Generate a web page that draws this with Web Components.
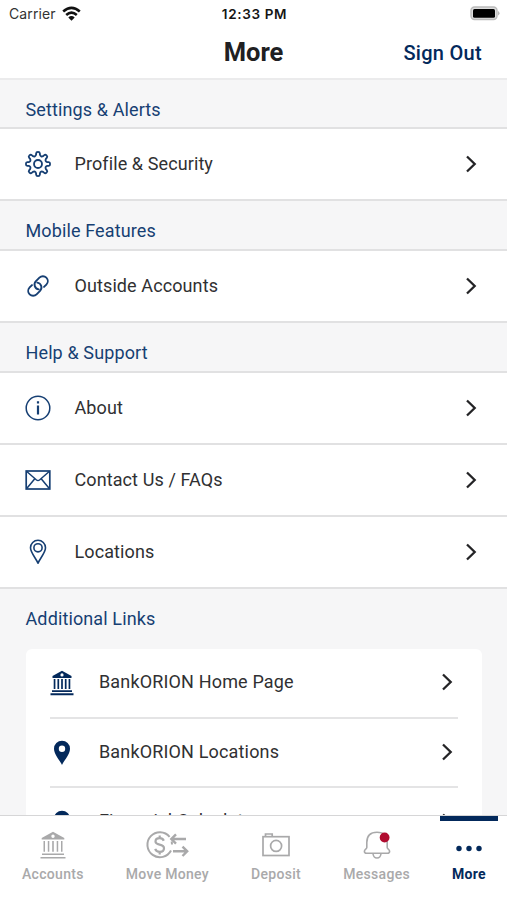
<!DOCTYPE html>
<html lang="en">
<head>
<meta charset="utf-8">
<title>More</title>
<style>
html, body { margin: 0; height: 100%; }
body { font-family: Roboto, "Liberation Sans", sans-serif; color: #303032; background: #f6f6f7; overflow: hidden;
  --navy: #163f73; --deep: #03295b; --line: #e1e1e2; }
</style>
</head>
<body>
<more-screen></more-screen>
<script>
const icons = {
  gear: `<svg width="26" height="26" viewBox="-12.700 -12.700 25.400 25.400" fill="none" stroke="currentColor" stroke-width="1.800" stroke-linejoin="round"><circle r="3.900"/><path id="g"/></svg>`,
  link: `<svg width="26" height="26" viewBox="-13 -13 26 26" fill="none" stroke="currentColor" stroke-width="1.900" stroke-linecap="round"><g transform="rotate(-45)"><path d="M3.600 4.900H6.900A4.900 4.900 0 0 0 6.900 -4.900H2A4.900 4.900 0 0 0 -1.900 2.900"/><path transform="rotate(180)" d="M3.600 4.900H6.900A4.900 4.900 0 0 0 6.900 -4.900H2A4.900 4.900 0 0 0 -1.900 2.900"/></g></svg>`,
  info: `<svg width="26" height="26" viewBox="0 0 26 26" fill="none" stroke="currentColor" stroke-width="1.500"><circle cx="13" cy="13" r="11.800"/><path stroke-width="2.200" d="M13 10.500V19.500M13 6.300V8.500"/></svg>`,
  mail: `<svg width="26" height="26" viewBox="0 0 26 26" fill="none" stroke="currentColor" stroke-width="1.700"><rect x="1.200" y="4" width="23.600" height="18"/><path stroke-width="1.500" d="M1.500 4.300L11.500 13Q13 14.200 14.500 13L24.500 4.300M1.500 21.700L9.800 11.700M24.500 21.700L16.200 11.700"/></svg>`,
  pin: `<svg width="26" height="26" viewBox="0 0 26 26" fill="none" stroke="currentColor" stroke-width="1.600" stroke-linejoin="round"><path d="M13 24.200C11.500 20 5.500 13.800 5.500 8.800A7.500 7.500 0 0 1 20.500 8.800C20.500 13.800 14.500 20 13 24.200Z"/><circle cx="13" cy="8.800" r="4.100"/></svg>`,
  bank: `<svg width="24" height="26" viewBox="0 0 24 26" fill="currentColor"><path fill-rule="evenodd" d="M12 .8L21.500 6V8H2.500V6ZM12 3.300A1.600 1.600 0 1 0 12 6.500A1.600 1.600 0 1 0 12 3.300Z"/><path d="M3.700 9H5.400V19H3.700ZM7.450 9H9.150V19H7.450ZM11.150 9H12.850V19H11.150ZM14.850 9H16.550V19H14.850ZM18.600 9H20.300V19H18.600ZM2 20.200H22V22H2ZM.5 23.300H23.500V25.200H.5Z"/></svg>`,
  hall: `<svg width="28" height="30" viewBox="0 0 28 30" fill="currentColor"><path fill-rule="evenodd" d="M14 1.800L25.300 8V9.600H2.700V8ZM14 4.600A1.700 1.700 0 1 0 14 8A1.700 1.700 0 1 0 14 4.600Z"/><path d="M4.500 11H6V21.800H4.500ZM8.800 11H10.300V21.800H8.800ZM13.200 11H14.800V21.800H13.200ZM17.700 11H19.200V21.800H17.700ZM22 11H23.500V21.800H22ZM3 23.400H25V25.100H3ZM1.500 26.900H26.500V28.600H1.500Z"/></svg>`,
  marker: `<svg width="24" height="26" viewBox="0 0 24 26" fill="currentColor"><path fill-rule="evenodd" d="M12 25C10 20.500 4 14.500 4 8.700A8 8 0 0 1 20 8.700C20 14.500 14 20.500 12 25ZM12 5.600A3.200 3.200 0 1 0 12 12A3.200 3.200 0 1 0 12 5.600Z"/></svg>`,
  chevron: `<svg width="12" height="18" viewBox="0 0 12 18" fill="none" stroke="#242426" stroke-width="2.300"><path d="M2 1.500L9.700 9L2 16.500"/></svg>`,
  money: `<svg width="44" height="30" viewBox="0 0 44 30" fill="none" stroke="currentColor" stroke-width="2"><path d="M24.600 6.800A12.500 12.500 0 1 0 26 20.500M26.700 11.500L27 14.500"/><path stroke-width="2.200" d="M18.800 10.800C18 8.900 16.500 8.200 14.700 8.200C12.300 8.200 10.500 9.500 10.500 11.500C10.500 16 19 13.300 19 18.200C19 20.400 17.300 21.800 14.800 21.800C12.500 21.800 10.900 20.800 10.200 18.800M14.700 5.500V8.200M14.700 21.800V24.500"/><path stroke-width="2.400" d="M41 9H26M31 4.300L26.300 9L31 13.700M28 21.300H42M37.500 16.600L42.200 21.300L37.500 26"/></svg>`,
  camera: `<svg width="30" height="30" viewBox="0 0 30 30" fill="none" stroke="currentColor" stroke-width="1.700"><rect x="2" y="6.700" width="26" height="18.800"/><path d="M4.500 6.700V4H11.200V6.700"/><circle cx="15.100" cy="15.900" r="5.500"/></svg>`,
  bell: `<svg width="30" height="30" viewBox="0 0 30 30" fill="none" stroke="currentColor" stroke-width="1.600" stroke-linejoin="round"><path d="M4.800 12.500C4.800 6 8.500 2.200 15 2.200S25.200 6 25.200 12.500V17.500C25.200 19 27.600 19.300 27.600 21.300C27.600 22.700 26.700 23.300 25.500 23.300H4.500C3.300 23.300 2.400 22.700 2.400 21.300C2.400 19.300 4.800 19 4.800 17.500ZM11 23.300A4 4.700 0 0 0 19 23.300"/><circle cx="22.600" cy="7.500" r="4.900" fill="#b00c2f" stroke="none"/></svg>`,
  dots: `<svg width="30" height="30" viewBox="0 0 30 30" fill="currentColor"><circle cx="5" cy="18.500" r="2.700"/><circle cx="15" cy="18.500" r="2.700"/><circle cx="25" cy="18.500" r="2.700"/></svg>`
};
// Eight rounded teeth around the hub, with rounded valleys between them.
const rot = (x, y, a) => (x * Math.cos(a) - y * Math.sin(a)).toFixed(2) + " " + (x * Math.sin(a) + y * Math.cos(a)).toFixed(2);
let gear = "";
for (let i = 0; i < 8; i++) {
  const a = i * Math.PI / 4;
  gear += (i ? "" : "M" + rot(-1.900, -9, a)) + "L" + rot(-1.800, -10.500, a) + "Q" + rot(-1.700, -11.800, a) + " " + rot(0, -11.800, a)
    + "Q" + rot(1.700, -11.800, a) + " " + rot(1.800, -10.500, a) + "L" + rot(1.900, -9, a) + "Q" + rot(2.720, -6.560, a) + " " + rot(-1.900, -9, a + Math.PI / 4);
}
icons.gear = icons.gear.replace('id="g"', `d="${gear}Z"`);

const define = (name, render) => customElements.define(name, class extends HTMLElement {
  connectedCallback() {
    if (!this.shadowRoot) this.attachShadow({ mode: "open" }).innerHTML = render(this);
  }
});

define("status-bar", () => `<style>
  :host { display: grid; grid-template-columns: 1fr auto 1fr; align-items: center; height: 27px; padding: 0 7px 0 9px; font-family: Inter, sans-serif; color: #151515; background: #fff; }
  .left { display: flex; align-items: center; gap: 6px; font-size: 14px; letter-spacing: .1px; color: #333; }
  .left svg { margin-top: -1px; }
  b { font-size: 13.500px; font-weight: 600; letter-spacing: .65px; }
  .battery { justify-self: end; margin-top: -1px; }
  svg { display: block; }
</style>
<div class="left"><span>Carrier</span><svg width="19" height="15" viewBox="0 0 19 15" fill="none" stroke="#111" stroke-width="2.600"><path d="M1.200 5.400Q9.500 -1.700 17.800 5.400M4.200 9Q9.500 4.400 14.800 9"/><path d="M6.300 11.500Q9.500 8.700 12.700 11.500L9.500 14.700Z" fill="#111" stroke="none"/></svg></div>
<b>12:33 PM</b>
<svg class="battery" width="31" height="16" viewBox="0 0 31 16"><rect x="2" y="2" width="26" height="12.500" rx="3.500" fill="#ddd" stroke="#bbb" stroke-width="1.400"/><rect x="4" y="4" width="22" height="8.700" rx="1.500" fill="#000"/><path d="M29.200 6Q31.700 8.200 29.200 10.500Z" fill="#aaa"/></svg>`);

define("title-bar", () => `<style>
  :host { display: grid; grid-template-columns: 1fr auto 1fr; align-items: center; height: 53px; padding: 0 25px; border-bottom: 2px solid #ebebec; box-sizing: border-box; background: #fff; }
  h1 { grid-column: 2; margin: -1px 0 0; font-size: 25.500px; line-height: 30px; font-weight: 700; color: #202022; }
  .action { justify-self: end; font-size: 20px; font-weight: 500; color: var(--deep); letter-spacing: .3px; }
</style><h1><slot></slot></h1><span class="action"><slot name="action"></slot></span>`);

define("menu-section", el => `<style>
  :host { display: block; }
  h2 { margin: 0; height: 50px; box-sizing: border-box; padding: 15px 25.500px 0; border-top: 2px solid var(--line); font-size: 18px; line-height: 30px; font-weight: 400; color: var(--navy); letter-spacing: .12px; }
  :host([first]) h2 { height: 47px; border-top: 0; padding-top: 15px; }
</style><h2>${el.getAttribute("heading")}</h2><slot></slot>`);

define("menu-row", el => `<style>
  :host { display: flex; align-items: center; height: 72px; box-sizing: border-box; padding: 0 30px 0 25px; border-top: 2px solid var(--line); background: #fff; font-size: 18px; letter-spacing: .1px; }
  .icon { width: 49.500px; color: var(--navy); }
  .label { flex: 1; padding-bottom: 2px; }
  svg { display: block; }
</style><span class="icon">${icons[el.getAttribute("icon")]}</span><span class="label"><slot></slot></span>${icons.chevron}`);

define("link-card", () => `<style>
  :host { display: block; margin: 12px 25px 0 26px; padding: 0 24px; background: #fff; border-radius: 6px; }
</style><slot></slot>`);

define("link-row", el => `<style>
  :host { display: flex; align-items: center; height: 69.700px; box-sizing: border-box; padding: 0 5px 1px 0; border-bottom: 2px solid #e4e4e5; font-size: 18px; letter-spacing: .16px; }
  .icon { width: 49px; padding-top: 2px; color: var(--deep); }
  .label { flex: 1; padding-bottom: 1px; }
  :host(:last-child) .label { padding-bottom: 3px; }
  svg { display: block; }
</style><span class="icon">${icons[el.getAttribute("icon")]}</span><span class="label"><slot></slot></span>${icons.chevron}`);

define("tab-bar", () => `<style>
  :host { display: flex; justify-content: space-between; height: 85px; box-sizing: border-box; padding: 0 9px 0 10px; border-top: 1px solid #d6d6d7; background: #fff; }
</style><slot></slot>`);

define("tab-item", el => `<style>
  :host { display: flex; flex-direction: column; align-items: center; box-sizing: border-box; padding: 9px 12px 0; border-top: 5px solid transparent; font-size: 14px; font-weight: 500; line-height: 20px; letter-spacing: .3px; color: #a9a9aa; }
  :host([active]) { position: relative; border-top-color: transparent; color: var(--deep); font-weight: 700; }
  :host([active])::before { content: ""; position: absolute; top: -5px; left: 0; right: 0; height: 5px; background: var(--deep); }
  svg { display: block; height: 30px; margin-bottom: 4px; }
</style>${icons[el.getAttribute("icon")]}<span><slot></slot></span>`);

define("more-screen", () => `<style>
  :host { display: flex; flex-direction: column; height: 900px; overflow: hidden; }
  main { flex: 1; min-height: 0; overflow: hidden; }
</style>
<status-bar></status-bar>
<title-bar>More<span slot="action">Sign Out</span></title-bar>
<main>
  <menu-section heading="Settings &amp; Alerts" first><menu-row icon="gear">Profile &amp; Security</menu-row></menu-section>
  <menu-section heading="Mobile Features"><menu-row icon="link">Outside Accounts</menu-row></menu-section>
  <menu-section heading="Help &amp; Support"><menu-row icon="info">About</menu-row><menu-row icon="mail">Contact Us / FAQs</menu-row><menu-row icon="pin">Locations</menu-row></menu-section>
  <menu-section heading="Additional Links"><link-card><link-row icon="bank">BankORION Home Page</link-row><link-row icon="marker">BankORION Locations</link-row><link-row icon="marker">Financial Calculators</link-row></link-card></menu-section>
</main>
<tab-bar>
  <tab-item icon="hall">Accounts</tab-item><tab-item icon="money">Move Money</tab-item><tab-item icon="camera">Deposit</tab-item><tab-item icon="bell">Messages</tab-item><tab-item icon="dots" active>More</tab-item>
</tab-bar>`);
</script>
</body>
</html>
